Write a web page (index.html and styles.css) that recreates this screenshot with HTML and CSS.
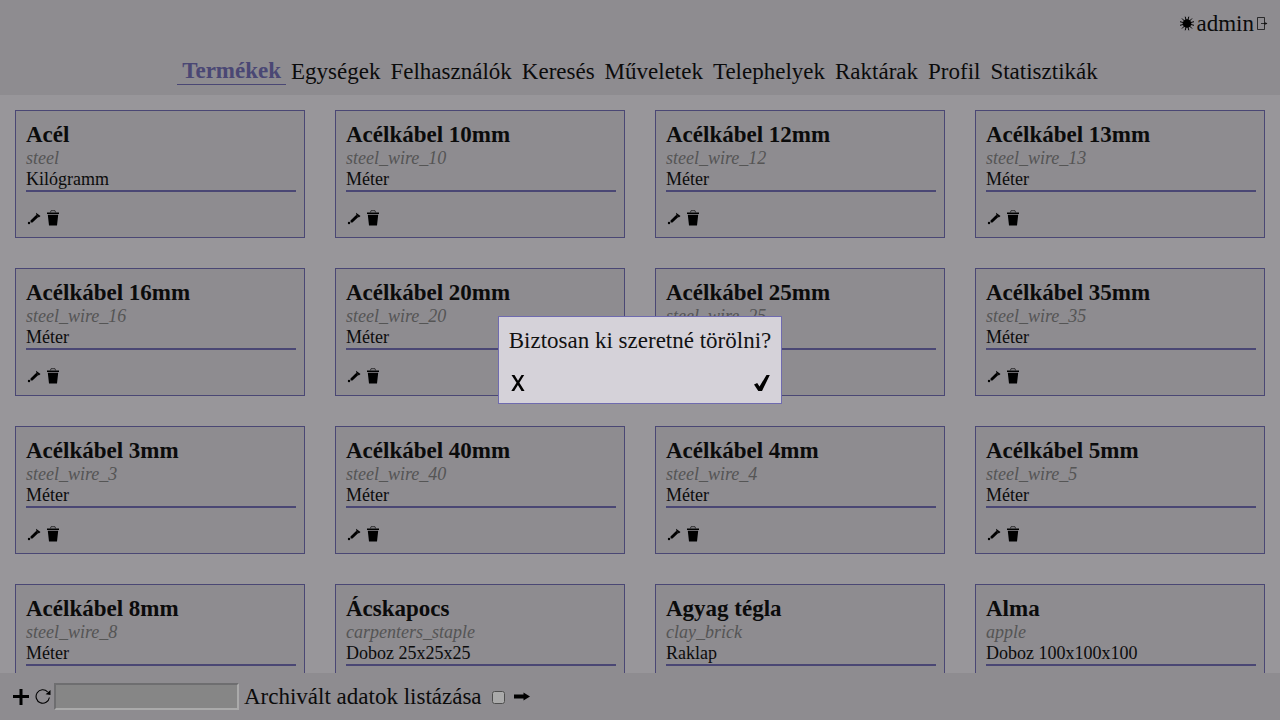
FILE: index.html
```html
<!DOCTYPE html>
<html lang="hu">
<head>
<meta charset="utf-8">
<meta name="viewport" content="width=device-width, initial-scale=1">
<title>Termékek</title>
<link rel="stylesheet" href="styles.css">
</head>
<body>
<svg class="sprites" aria-hidden="true">
  <symbol id="pencil" viewBox="0 0 16 16"><path d="M4.500 10.400 10.400 4.800 12.300 6.900 6.500 12.400 4.600 12.400Z"/><path d="M10 2.700 14.500 6 12.800 7.600 11.500 6 10.300 4.600Z"/><circle cx="3" cy="13" r="1.200"/></symbol>
  <symbol id="trash" viewBox="0 0 16 16"><path d="M5.400 2.400 6 .7h4l.6 1.700" fill="none" stroke="#000" stroke-opacity=".65"/><path d="M2 2.400h12v1.500H2ZM2.800 4.800h10.400L12 15.600H4Z"/></symbol>
</svg>
<header class="header">
  <div class="user">
    <button class="icon" aria-label="Téma"><svg viewBox="0 0 16 16"><circle cx="8" cy="7.500" r="4.300"/><path d="M6.200.7 9.800 14.300M9.800.7 6.200 14.300M3 2.500 13 12.500M13 2.500 3 12.500M1 5.700 15 9.300M15 5.700 1 9.300" stroke="#000" stroke-width="1"/></svg></button>
    <span>admin</span>
    <button class="icon icon-exit" aria-label="Kilépés"><svg viewBox="0 0 12 16"><path d="M8.500 1.500h-7v12h7Z" fill="none" stroke="#000" stroke-opacity=".7"/><path d="M5 7.500h6" stroke="#000" stroke-opacity=".7"/><path d="M8.800 5.800 11.500 7.500 8.800 9.200Z" fill-opacity=".5"/></svg></button>
  </div>
  <nav class="nav">
    <a class="nav-link active" href="#">Termékek</a>
    <a class="nav-link" href="#">Egységek</a>
    <a class="nav-link" href="#">Felhasználók</a>
    <a class="nav-link" href="#">Keresés</a>
    <a class="nav-link" href="#">Műveletek</a>
    <a class="nav-link" href="#">Telephelyek</a>
    <a class="nav-link" href="#">Raktárak</a>
    <a class="nav-link" href="#">Profil</a>
    <a class="nav-link" href="#">Statisztikák</a>
  </nav>
</header>
<main class="cards" id="cards"></main>
<footer class="footer">
  <button class="icon icon-add" aria-label="Hozzáadás"><svg viewBox="0 0 16 16"><path d="M6.500 0h3v6H16v3H9.500v7h-3V9H0V6h6.500Z"/></svg></button>
  <button class="icon" aria-label="Frissítés"><svg viewBox="0 0 16 16"><path d="M12.600 2.800A6.700 6.700 0 1 0 14.400 8.500" fill="none" stroke="#000" stroke-width="1.100"/><path d="M15.500 1V6L10.600 5.200Z"/></svg></button>
  <input class="search" type="text" aria-label="Keresés">
  <label class="archive" for="archived">Archivált adatok listázása</label>
  <input class="check" type="checkbox" id="archived">
  <button class="icon" aria-label="Tovább"><svg viewBox="0 0 16 16"><path d="M0 5.500h9.500V3.500L16 7.500 9.500 11.500v-2H0Z"/></svg></button>
</footer>
<div class="backdrop"></div>
<dialog class="confirm" open aria-labelledby="question">
  <p class="question" id="question">Biztosan ki szeretné törölni?</p>
  <div class="answers">
    <button class="icon icon-answer" aria-label="Nem"><svg viewBox="0 0 20 20"><path d="M3.500 2H6.500L10 7.800 13.500 2H16.200L11.400 9.700 16.600 18H13.500L9.900 12 6.200 18H3.300L8.500 9.800Z"/></svg></button>
    <button class="icon icon-answer" aria-label="Igen"><svg viewBox="0 0 20 20"><path d="M2 11.500 5.200 10 7.500 13.500 14.500 2H17.800L10 18H6.300Z"/></svg></button>
  </div>
</dialog>
<script src="cards.js"></script>
</body>
</html>
```
FILE: styles.css
```css
* { box-sizing: border-box; }

body {
  display: flex;
  flex-direction: column;
  height: 100vh;
  margin: 0;
  overflow: hidden;
  background: #e4e1e8;
  color: #111;
  font: 23px/27px "Liberation Serif", "Times New Roman", serif;
}

.sprites { display: none; }

.icon {
  flex: none;
  width: 16px;
  height: 16px;
  padding: 0;
  border: 0;
  background: none;
  cursor: pointer;
}

.icon svg {
  display: block;
  width: 100%;
  height: 100%;
}

.header {
  flex: none;
  padding: 10px 12px;
  background: #d5d2d9;
}

.user {
  display: flex;
  justify-content: flex-end;
  align-items: center;
  gap: 2px;
}

.icon-exit { width: 12px; }

.nav {
  display: flex;
  justify-content: center;
  align-items: center;
  margin-top: 20px;
}

.nav-link {
  padding: 0 5px;
  color: inherit;
  text-decoration: none;
}

.nav-link.active {
  border-bottom: 1px solid #6f6baf;
  color: #6f6baf;
  font-weight: bold;
}

.cards {
  display: grid;
  flex: 1;
  grid-template-columns: repeat(auto-fill, minmax(260px, 1fr));
  align-content: start;
  gap: 30px;
  min-height: 0;
  padding: 15px;
  overflow: hidden;
}

.card {
  height: 128px;
  padding: 10px 8px 10px 10px;
  border: 1px solid #6f6baf;
  background: #d5d2d9;
  font-size: 18px;
  line-height: 21px;
}

.card-title {
  margin: 0;
  font-size: 23px;
  line-height: 27px;
}

.card-key {
  margin: 0;
  color: #808080;
  font-style: italic;
}

.card-unit {
  margin: 0;
  border-bottom: 2px solid #6f6baf;
}

.card-actions {
  display: flex;
  gap: 3px;
  margin-top: 18px;
}

.footer {
  display: flex;
  flex: none;
  align-items: center;
  gap: 5px;
  padding: 10px 13px;
  background: #d5d2d9;
}

.icon-add { margin-right: 1px; }

.search {
  width: 185px;
  height: 27px;
  margin-left: -2px;
  border: 2px solid;
  border-color: #a6a6a8 #fff #fff #a6a6a8;
  background: #c9c9ca;
  font: inherit;
}

.check {
  width: 13px;
  height: 13px;
  margin: 2px 4px 0 5px;
}

.backdrop {
  position: fixed;
  inset: 0;
  background: rgb(0 0 0 / 33.3%);
}

.confirm {
  position: fixed;
  inset: 0;
  width: max-content;
  height: max-content;
  margin: auto;
  padding: 10px 9px;
  border: 1px solid #6f6baf;
  background: #d5d2d9;
  color: #111;
}

.question {
  margin: 0;
  padding: 0 1px;
}

.answers {
  display: flex;
  justify-content: space-between;
  margin-top: 19px;
}

.icon-answer {
  width: 20px;
  height: 20px;
}
```
FILE: cards.js
```js
const products = [
  ["Acél", "steel", "Kilógramm"],
  ["Acélkábel 10mm", "steel_wire_10", "Méter"],
  ["Acélkábel 12mm", "steel_wire_12", "Méter"],
  ["Acélkábel 13mm", "steel_wire_13", "Méter"],
  ["Acélkábel 16mm", "steel_wire_16", "Méter"],
  ["Acélkábel 20mm", "steel_wire_20", "Méter"],
  ["Acélkábel 25mm", "steel_wire_25", "Méter"],
  ["Acélkábel 35mm", "steel_wire_35", "Méter"],
  ["Acélkábel 3mm", "steel_wire_3", "Méter"],
  ["Acélkábel 40mm", "steel_wire_40", "Méter"],
  ["Acélkábel 4mm", "steel_wire_4", "Méter"],
  ["Acélkábel 5mm", "steel_wire_5", "Méter"],
  ["Acélkábel 8mm", "steel_wire_8", "Méter"],
  ["Ácskapocs", "carpenters_staple", "Doboz 25x25x25"],
  ["Agyag tégla", "clay_brick", "Raklap"],
  ["Alma", "apple", "Doboz 100x100x100"],
];

document.getElementById("cards").innerHTML = products.map(([name, key, unit]) => `
  <article class="card">
    <h2 class="card-title">${name}</h2>
    <p class="card-key">${key}</p>
    <p class="card-unit">${unit}</p>
    <div class="card-actions">
      <button class="icon" aria-label="Szerkesztés"><svg><use href="#pencil"/></svg></button>
      <button class="icon" aria-label="Törlés"><svg><use href="#trash"/></svg></button>
    </div>
  </article>`).join("");
```
